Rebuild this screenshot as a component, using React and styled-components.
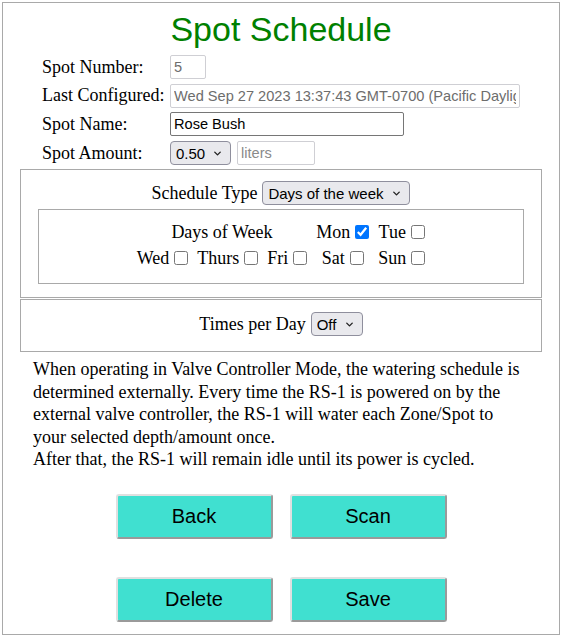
import styled, { createGlobalStyle } from 'styled-components';
import { ChevronDown } from 'lucide-react';

const GlobalStyle = createGlobalStyle`
    body {
        margin: 0;
        background: #ffffff;
        font-family: "Liberation Serif", "Times New Roman", serif;
        font-size: 18px;
        color: #000000;
    }
`

const Page = styled.div`
    padding: 2px;
`

const Frame = styled.div`
    width: 558px;
    box-sizing: border-box;
    border: 1px solid #a9a9a9;
    padding-bottom: 12px;
`

const Title = styled.h1`
    margin: 6px 0 0;
    text-align: center;
    font-family: "Liberation Sans", Arial, sans-serif;
    font-weight: 400;
    font-size: 34px;
    line-height: 40px;
    color: #008000;
`

const FormGrid = styled.div`
    display: grid;
    grid-template-columns: 128px auto;
    grid-auto-rows: 24px;
    row-gap: 4.7px;
    align-items: center;
    margin: 6px 0 0 39px;
`

const Label = styled.span`
    font-size: 18px;
    white-space: nowrap;
`

const Field = styled.input`
    box-sizing: border-box;
    width: ${p => p.$w}px;
    height: 24px;
    padding: 1px 3px;
    font-family: "Liberation Sans", Arial, sans-serif;
    font-size: 14.6px;
    color: #000000;
    background: #ffffff;
    border: 1px solid #767676;
    border-radius: 2px;

    &:disabled {
        color: #6d6d6d;
        border-color: #cfcfd4;
    }
    &::placeholder {
        color: #8a8a8a;
    }
`

const Inline = styled.div`
    display: flex;
    align-items: center;
    gap: ${p => p.$gap || 6}px;
`

const SelectWrap = styled.div`
    position: relative;
    width: ${p => p.$w}px;
    height: 24px;

    svg {
        position: absolute;
        right: 8px;
        top: 7px;
        pointer-events: none;
    }
`

const Select = styled.select`
    appearance: none;
    box-sizing: border-box;
    width: 100%;
    height: 100%;
    padding: 0 0 0 5px;
    font-family: "Liberation Sans", Arial, sans-serif;
    font-size: 15px;
    color: #000000;
    background: #e9e9ed;
    border: 1px solid #8f8f9d;
    border-radius: 4px;
`

const Box = styled.div`
    margin: ${p => p.$margin};
    padding: ${p => p.$padding};
    border: 1px solid #a9a9a9;
`

const CenterRow = styled.div`
    display: flex;
    justify-content: center;
    align-items: center;
    gap: 5px;
    height: 24px;
`

const DaysGrid = styled.div`
    display: grid;
    grid-template-columns: repeat(5, auto);
    grid-auto-rows: 22px;
    column-gap: 9px;
    row-gap: 4px;
    justify-content: center;
    align-items: center;
`

const DayCell = styled.label`
    grid-column: span ${p => p.$span || 1};
    display: flex;
    justify-content: center;
    align-items: center;
    gap: 5px;
    white-space: nowrap;
`

const Check = styled.input.attrs({ type: 'checkbox' })`
    width: 14px;
    height: 14px;
    margin: 0;
    accent-color: #0075ff;
`

const Note = styled.p`
    margin: 6px 0 0;
    padding: 0 30px;
    font-size: 18px;
    line-height: 22.5px;
`

const Buttons = styled.div`
    display: grid;
    grid-template-columns: 157px 157px;
    grid-auto-rows: 45px;
    column-gap: 17px;
    row-gap: 38px;
    justify-content: center;
    margin-top: 23px;
`

const ActionButton = styled.button`
    font-family: "Liberation Sans", Arial, sans-serif;
    font-size: 20px;
    color: #000000;
    background: #40e0d0;
    border: 2px solid;
    border-color: #e0e0e0 #9a9a9a #9a9a9a #e0e0e0;
    border-radius: 3px;
    cursor: pointer;
`

const Arrow = () => <ChevronDown size={11} strokeWidth={3} color="#222" />

const days = ['Wed', 'Thurs', 'Fri', 'Sat', 'Sun']

const App = () => {
    return (
    <Page>
        <GlobalStyle />
        <Frame>
            <Title>Spot Schedule</Title>
            <FormGrid>
                <Label>Spot Number:</Label>
                <Field $w={36} value="5" disabled readOnly />
                <Label>Last Configured:</Label>
                <Field $w={350} value="Wed Sep 27 2023 13:37:43 GMT-0700 (Pacific Daylight Time)" disabled readOnly />
                <Label>Spot Name:</Label>
                <Field $w={234} defaultValue="Rose Bush" />
                <Label>Spot Amount:</Label>
                <Inline>
                    <SelectWrap $w={61}>
                        <Select defaultValue="0.50">
                            <option>0.25</option>
                            <option>0.50</option>
                            <option>1.00</option>
                        </Select>
                        <Arrow />
                    </SelectWrap>
                    <Field $w={78} placeholder="liters" disabled />
                </Inline>
            </FormGrid>

            <Box $margin="4px 17px 0" $padding="11px 0 13px">
                <CenterRow>
                    <span>Schedule Type</span>
                    <SelectWrap $w={148}>
                        <Select defaultValue="week">
                            <option value="week">Days of the week</option>
                            <option value="interval">Interval</option>
                        </Select>
                        <Arrow />
                    </SelectWrap>
                </CenterRow>
                <Box $margin="4px 17px 0" $padding="11px 0 14px">
                    <DaysGrid>
                        <DayCell $span={3}>Days of Week</DayCell>
                        <DayCell>Mon <Check defaultChecked /></DayCell>
                        <DayCell>Tue <Check /></DayCell>
                        {days.map(d => (
                            <DayCell key={d}>{d} <Check /></DayCell>
                        ))}
                    </DaysGrid>
                </Box>
            </Box>

            <Box $margin="1px 17px 0" $padding="12px 0 15px">
                <CenterRow>
                    <span>Times per Day</span>
                    <SelectWrap $w={52}>
                        <Select defaultValue="off">
                            <option value="off">Off</option>
                            <option value="1">1</option>
                            <option value="2">2</option>
                        </Select>
                        <Arrow />
                    </SelectWrap>
                </CenterRow>
            </Box>

            <Note>
                When operating in Valve Controller Mode, the watering schedule is determined externally. Every time the RS-1 is powered on by the external valve controller, the RS-1 will water each Zone/Spot to your selected depth/amount once.
                <br />
                After that, the RS-1 will remain idle until its power is cycled.
            </Note>

            <Buttons>
                <ActionButton>Back</ActionButton>
                <ActionButton>Scan</ActionButton>
                <ActionButton>Delete</ActionButton>
                <ActionButton>Save</ActionButton>
            </Buttons>
        </Frame>
    </Page>
    )
}

export default App
